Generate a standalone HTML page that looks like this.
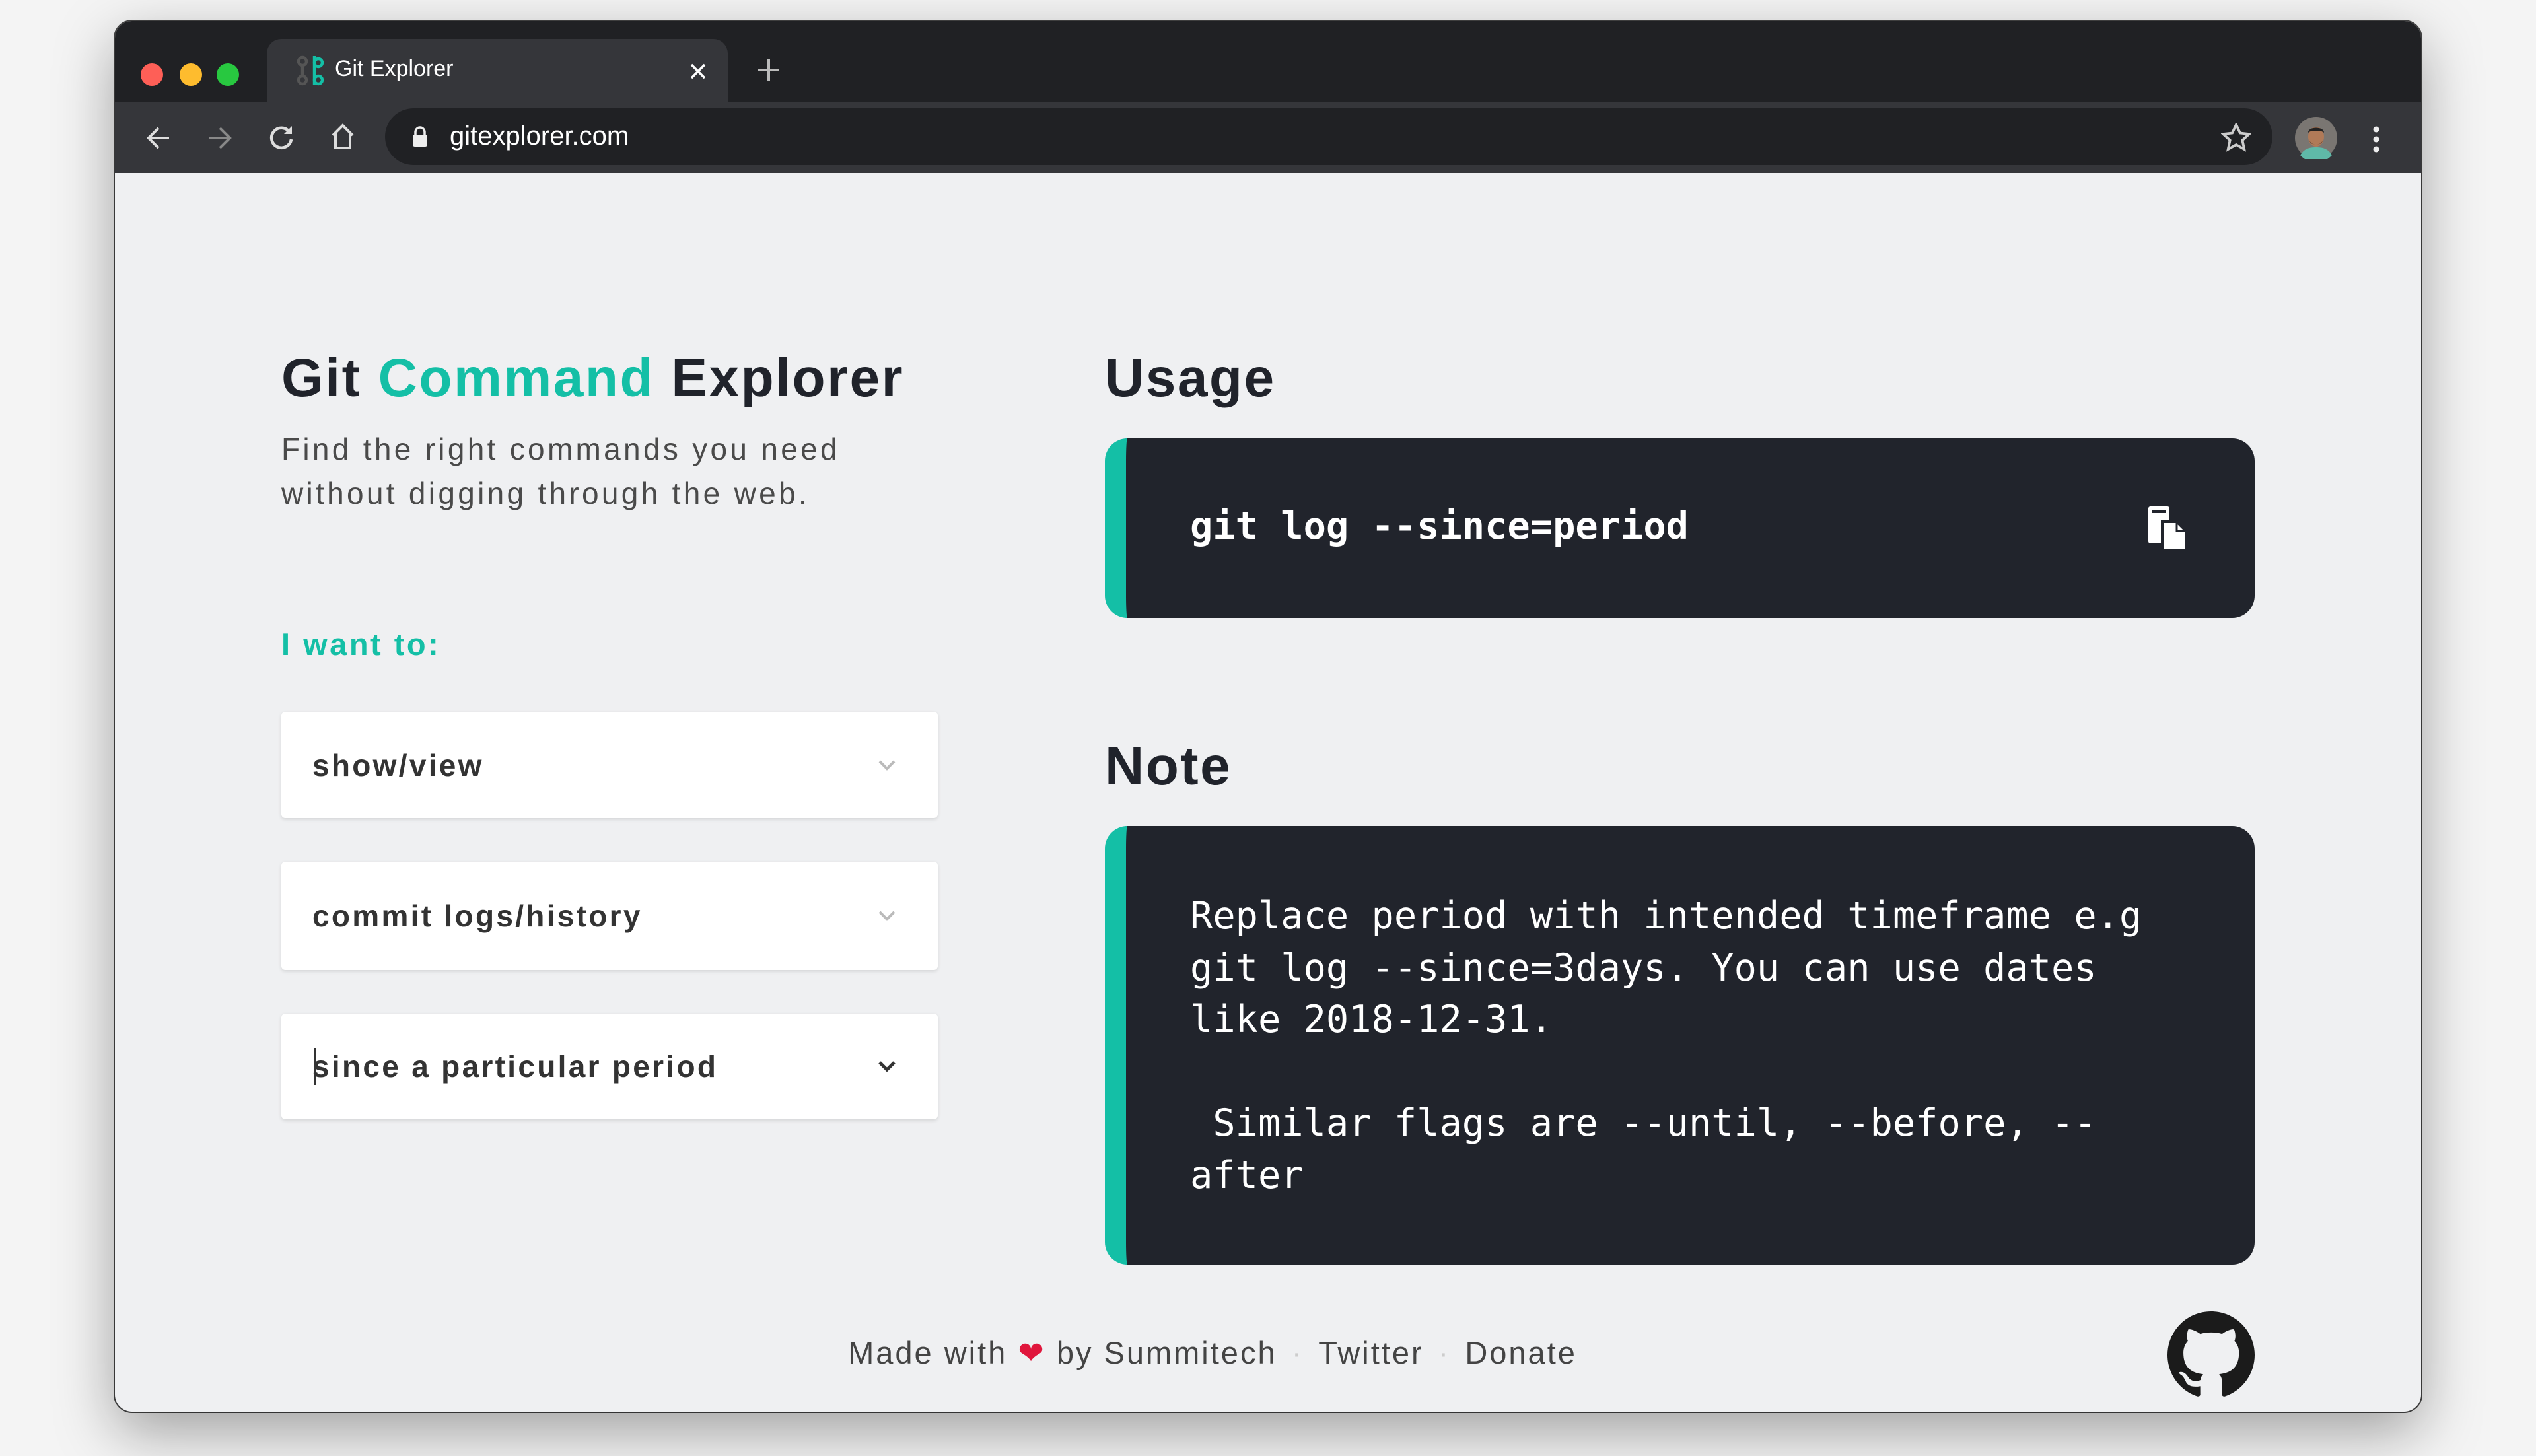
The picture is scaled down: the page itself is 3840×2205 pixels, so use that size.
<!DOCTYPE html>
<html><head><meta charset="utf-8">
<style>
*{box-sizing:border-box;margin:0;padding:0}
html,body{width:3840px;height:2205px;overflow:hidden;background:#f4f4f4;font-family:"Liberation Sans",sans-serif}
.win{position:absolute;left:174px;top:32px;width:3492px;height:2106px;border-radius:26px;overflow:hidden;background:#eff0f2;box-shadow:0 30px 90px rgba(0,0,0,.35),0 0 0 2px #444}
.tabbar{position:absolute;left:0;top:0;width:100%;height:123px;background:#202124}
.dot{position:absolute;top:64px;width:34px;height:34px;border-radius:50%}
.tab{position:absolute;left:230px;top:27px;width:698px;height:96px;background:#35363a;border-radius:22px 22px 0 0}
.tab .t{position:absolute;left:103px;top:26px;color:#fff;font-size:34px}
.toolbar{position:absolute;left:0;top:123px;width:100%;height:107px;background:#35363a}
.url{position:absolute;left:409px;top:9px;width:2858px;height:86px;border-radius:43px;background:#202124}
.url .t{position:absolute;left:98px;top:20px;color:#fff;font-size:40px}
.content{position:absolute;left:0;top:230px;width:100%;height:1876px}
h1{position:absolute;font-size:82px;font-weight:bold;color:#20232b;white-space:nowrap;letter-spacing:2.5px}
.teal{color:#14bfa6}
.sub{position:absolute;left:252px;top:385px;font-size:46px;line-height:67px;color:#4a4a4a;letter-spacing:4.3px}
.want{position:absolute;left:252px;top:686px;font-size:47px;font-weight:bold;color:#14bfa6;letter-spacing:3.5px}
.sel{position:absolute;left:252px;width:994px;background:#fff;border-radius:6px;box-shadow:0 2px 6px rgba(0,0,0,.12)}
.sel span{position:absolute;left:47px;top:50%;transform:translateY(-50%);font-size:46px;font-weight:bold;color:#333;letter-spacing:3.3px;white-space:nowrap}
.sel svg{position:absolute;left:900px;top:50%;margin-top:-14px}
.box{position:absolute;left:1499px;width:1741px;background:#21242c;border-radius:34px;border-left:32px solid #14bfa6}
.mono{font-family:"DejaVu Sans Mono","Liberation Mono",monospace;color:#fff;white-space:pre;position:absolute;left:97px;font-size:57px}
.foot{position:absolute;top:1759px;left:-84px;width:3492px;text-align:center;font-size:47px;color:#444;letter-spacing:3px}
.foot .d{color:#ccc;margin:0 22px}
</style></head><body>
<div class="win">
 <div class="tabbar">
  <div class="dot" style="left:39px;background:#fe5f57"></div>
  <div class="dot" style="left:98px;background:#febc2e"></div>
  <div class="dot" style="left:154px;background:#28c840"></div>
  <div class="tab">
   <svg style="position:absolute;left:42px;top:22px" width="52" height="52" viewBox="0 0 26 26"><g fill="none" stroke-width="2.2"><circle cx="6" cy="6" r="3" stroke="#555"/><circle cx="6" cy="20" r="3" stroke="#555"/><path d="M6 9v8" stroke="#555"/><circle cx="18" cy="7" r="3" stroke="#14bfa6"/><circle cx="18" cy="20" r="3" stroke="#14bfa6"/><path d="M15 2v22" stroke="#14bfa6"/></g></svg>
   <div class="t">Git Explorer</div>
   <svg style="position:absolute;left:640px;top:36px" width="26" height="26" viewBox="0 0 26 26"><path d="M3 3L23 23M23 3L3 23" stroke="#fff" stroke-width="3.5"/></svg>
  </div>
  <svg style="position:absolute;left:972px;top:56px" width="36" height="36" viewBox="0 0 36 36"><path d="M18 2v32M2 18h32" stroke="#bbb" stroke-width="4"/></svg>
 </div>
 <div class="toolbar">
  <svg style="position:absolute;left:46px;top:34px" width="40" height="40" viewBox="0 0 40 40" fill="none" stroke="#ddd" stroke-width="4"><path d="M36 20H6M20 5L5 20l15 15"/></svg>
  <svg style="position:absolute;left:139px;top:34px" width="40" height="40" viewBox="0 0 40 40" fill="none" stroke="#888" stroke-width="4"><path d="M4 20h30M20 5l15 15-15 15"/></svg>
  <svg style="position:absolute;left:231px;top:32px" width="42" height="42" viewBox="0 0 42 42" fill="none" stroke="#ddd" stroke-width="4.5"><path d="M34 14A15 15 0 1 0 36 24"/><path d="M37 4v12H25z" fill="#ddd" stroke="none"/></svg>
  <svg style="position:absolute;left:325px;top:30px" width="40" height="44" viewBox="0 0 40 44" fill="none" stroke="#ddd" stroke-width="4"><path d="M5 20L20 5l15 15M9 17v22h22V17"/></svg>
  <div class="url">
   <svg style="position:absolute;left:40px;top:27px" width="26" height="32" viewBox="0 0 26 32"><path d="M6 14V9a7 7 0 0 1 14 0v5" fill="none" stroke="#eee" stroke-width="3.5"/><rect x="2" y="13" width="22" height="18" rx="3" fill="#eee"/></svg>
   <div class="t">gitexplorer.com</div>
   <svg style="position:absolute;left:2780px;top:22px" width="46" height="44" viewBox="0 0 24 23"><path d="M12 1.5l3.1 6.6 7.2.8-5.4 4.9 1.5 7.1L12 17.3l-6.4 3.6 1.5-7.1L1.7 8.9l7.2-.8z" fill="none" stroke="#ccc" stroke-width="2"/></svg>
  </div>
  <svg style="position:absolute;left:3301px;top:22px" width="64" height="64" viewBox="0 0 64 64"><circle cx="32" cy="32" r="32" fill="#7a7672"/><path d="M8 58c6-10 14-12 24-12s18 2 24 12a32 32 0 0 1-48 0z" fill="#5fb9a8"/><ellipse cx="32" cy="30" rx="12" ry="15" fill="#b07a58"/><path d="M20 24c0-10 24-10 24 0-4-4-20-4-24 0z" fill="#222"/><path d="M22 36c4 8 16 8 20 0-2 8-18 8-20 0z" fill="#2b2220"/></svg>
  <svg style="position:absolute;left:3416px;top:36px" width="16" height="40" viewBox="0 0 16 40" fill="#eee"><circle cx="8" cy="5" r="4.5"/><circle cx="8" cy="20" r="4.5"/><circle cx="8" cy="35" r="4.5"/></svg>
 </div>
 <div class="content">
  <h1 style="left:252px;top:264px">Git <span class="teal">Command</span> Explorer</h1>
  <div class="sub">Find the right commands you need<br>without digging through the web.</div>
  <div class="want">I want to:</div>
  <div class="sel" style="top:816px;height:161px"><span>show/view</span><svg width="34" height="28" viewBox="0 0 34 28"><path d="M6 8l11 11 11-11" fill="none" stroke="#bbb" stroke-width="4"/></svg></div>
  <div class="sel" style="top:1043px;height:164px"><span>commit logs/history</span><svg width="34" height="28" viewBox="0 0 34 28"><path d="M6 8l11 11 11-11" fill="none" stroke="#bbb" stroke-width="4"/></svg></div>
  <div class="sel" style="top:1273px;height:160px"><span>since a particular period</span><div style="position:absolute;left:50px;top:52px;width:3px;height:56px;background:#333"></div><svg width="34" height="28" viewBox="0 0 34 28"><path d="M6 8l11 11 11-11" fill="none" stroke="#333" stroke-width="5"/></svg></div>

  <h1 style="left:1499px;top:264px">Usage</h1>
  <div class="box" style="top:402px;height:272px">
   <div class="mono" style="top:100px;font-weight:bold">git log --since=period</div>
   <svg style="position:absolute;left:1545px;top:100px" width="68" height="72" viewBox="0 0 68 72"><rect x="3" y="3" width="32" height="56" rx="3" fill="#fff"/><rect x="9" y="9" width="20" height="4" fill="#21242c"/><path d="M24 26h22l14 14v30H24z" fill="#fff" stroke="#21242c" stroke-width="4"/><path d="M46 26v14h14" fill="none" stroke="#21242c" stroke-width="3"/></svg>
  </div>

  <h1 style="left:1499px;top:852px">Note</h1>
  <div class="box" style="top:989px;height:664px">
   <div class="mono" style="top:97px;line-height:78.5px">Replace period with intended timeframe e.g
git log --since=3days. You can use dates
like 2018-12-31.

 Similar flags are --until, --before, --
after</div>
  </div>

  <div class="foot">Made with <span style="color:#e0163c">&#10084;</span> by Summitech<span class="d">·</span>Twitter<span class="d">·</span>Donate</div>
  <svg style="position:absolute;left:3108px;top:1724px" width="132" height="132" viewBox="0 0 16 16"><path fill="#1b1b1b" d="M8 0C3.58 0 0 3.58 0 8c0 3.54 2.29 6.530 5.47 7.59.4.07.55-.17.55-.38 0-.19-.01-.82-.01-1.49-2.01.37-2.53-.49-2.69-.94-.09-.23-.48-.94-.82-1.13-.28-.15-.68-.52-.01-.53.63-.01 1.08.58 1.23.82.72 1.21 1.87.87 2.33.66.07-.52.28-.87.51-1.07-1.78-.2-3.64-.89-3.64-3.95 0-.87.31-1.59.82-2.15-.08-.2-.36-1.02.08-2.12 0 0 .67-.21 2.2.82.64-.18 1.32-.27 2-.27.68 0 1.36.09 2 .27 1.53-1.04 2.2-.82 2.2-.82.44 1.1.16 1.92.08 2.12.51.56.82 1.27.82 2.15 0 3.07-1.87 3.750-3.65 3.95.29.25.54.73.54 1.48 0 1.07-.01 1.93-.01 2.2 0 .21.15.46.55.38A8.013 8.013 0 0016 8c0-4.42-3.58-8-8-8z"/></svg>
 </div>
</div>
</body></html>
